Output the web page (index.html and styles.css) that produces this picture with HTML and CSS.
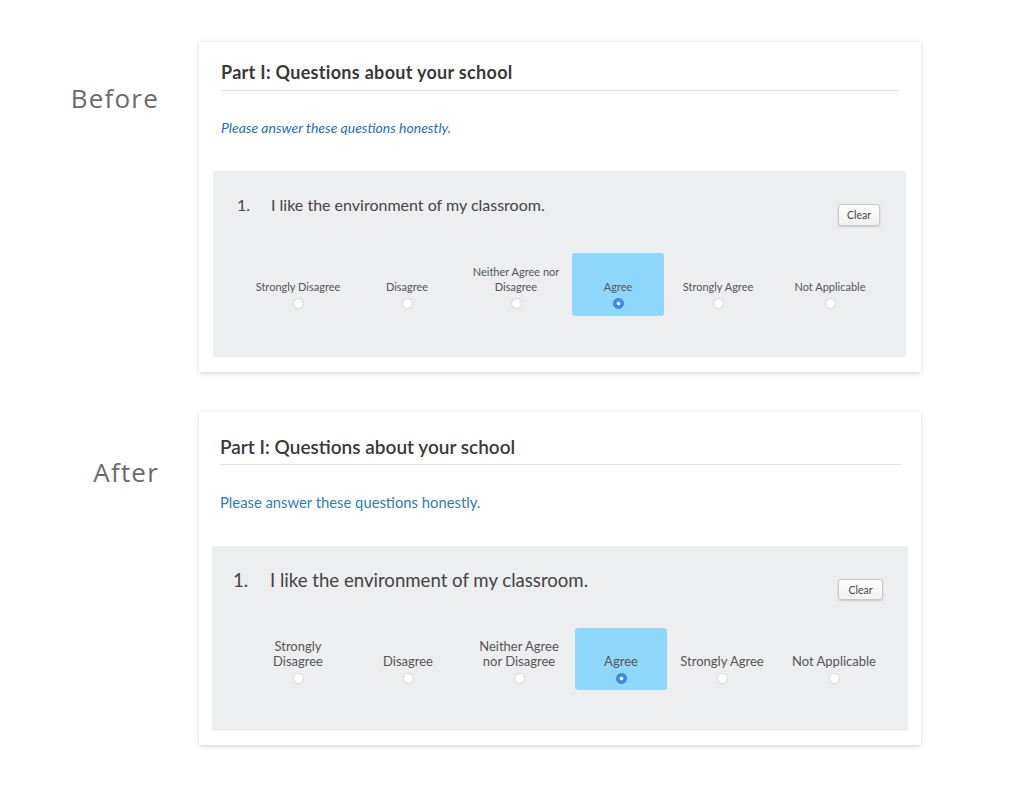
FILE: index.html
```html
<!DOCTYPE html>
<html lang="en">
<head>
<meta charset="utf-8">
<title>Before / After survey</title>
<link rel="stylesheet" href="styles.css">
</head>
<body>
<main class="page">
  <section class="row row-before">
    <div class="tag">Before</div>
    <div class="card">
      <div class="head">
        <h2 class="title">Part I: Questions about your school</h2>
      </div>
      <p class="intro">Please answer these questions honestly.</p>
      <div class="question">
        <div class="q-top">
          <div class="q-text"><span class="num">1.</span><span>I like the environment of my classroom.</span></div>
          <button class="clear" type="button">Clear</button>
        </div>
        <div class="options">
          <div class="opt"><span class="lbl">Strongly Disagree</span><span class="radio"></span></div>
          <div class="opt"><span class="lbl">Disagree</span><span class="radio"></span></div>
          <div class="opt"><span class="lbl">Neither Agree nor<br>Disagree</span><span class="radio"></span></div>
          <div class="opt selected"><span class="lbl">Agree</span><span class="radio on"></span></div>
          <div class="opt"><span class="lbl">Strongly Agree</span><span class="radio"></span></div>
          <div class="opt"><span class="lbl">Not Applicable</span><span class="radio"></span></div>
        </div>
      </div>
    </div>
  </section>

  <section class="row row-after">
    <div class="tag">After</div>
    <div class="card">
      <div class="head">
        <h2 class="title">Part I: Questions about your school</h2>
      </div>
      <p class="intro">Please answer these questions honestly.</p>
      <div class="question">
        <div class="q-top">
          <div class="q-text"><span class="num">1.</span><span>I like the environment of my classroom.</span></div>
          <button class="clear" type="button">Clear</button>
        </div>
        <div class="options">
          <div class="opt"><span class="lbl">Strongly<br>Disagree</span><span class="radio"></span></div>
          <div class="opt"><span class="lbl">Disagree</span><span class="radio"></span></div>
          <div class="opt"><span class="lbl">Neither Agree<br>nor Disagree</span><span class="radio"></span></div>
          <div class="opt selected"><span class="lbl">Agree</span><span class="radio on"></span></div>
          <div class="opt"><span class="lbl">Strongly Agree</span><span class="radio"></span></div>
          <div class="opt"><span class="lbl">Not Applicable</span><span class="radio"></span></div>
        </div>
      </div>
    </div>
  </section>
</main>
</body>
</html>
```

FILE: styles.css
```css
* { box-sizing: border-box; }

html, body {
  margin: 0;
  padding: 0;
  background: #ffffff;
}

body {
  font-family: "Lato", "Open Sans", sans-serif;
  color: #444;
}

.page {
  display: flex;
  flex-direction: column;
  gap: 40px;
  padding: 42px 0 43px;
}

.row {
  display: grid;
  grid-template-columns: 158px 722px;
  column-gap: 41px;
  align-items: start;
}

.tag {
  text-align: right;
  font-family: "Open Sans", sans-serif;
  font-weight: 400;
  font-size: 26px;
  line-height: 32px;
  color: #6b6b6b;
  letter-spacing: 1.2px;
  margin-right: -1px;
}

.row-before .tag { padding-top: 40px; }
.row-after .tag { padding-top: 44px; }

.card {
  background: #fff;
  box-shadow: 0 1px 5px rgba(0, 0, 0, 0.18);
}

.title {
  margin: 0;
  color: #3a3a3a;
}

.intro { margin: 0; }

.question {
  background: #edeef0;
}

.q-top {
  display: flex;
  justify-content: space-between;
  align-items: flex-start;
}

.q-text {
  display: flex;
  color: #444;
}

.clear {
  font-family: "Lato", sans-serif;
  font-size: 10.5px;
  color: #444;
  background: linear-gradient(#ffffff, #f1f1f1);
  border: 1px solid #c8c8c8;
  border-radius: 3px;
  box-shadow: 0 1px 2px rgba(0, 0, 0, 0.15);
  padding: 0;
  cursor: pointer;
}

.options {
  display: grid;
}

.opt {
  display: flex;
  flex-direction: column;
  justify-content: flex-end;
  align-items: center;
  text-align: center;
  color: #555;
}

.opt.selected {
  background: #8fd8fc;
  border-radius: 3px;
}

.radio {
  display: block;
  width: 11px;
  height: 11px;
  border-radius: 50%;
  background: #fff;
  border: 1px solid #d6d6d6;
  margin-top: 4px;
}

.radio.on {
  background: radial-gradient(circle, #ffffff 0 1.6px, #3a8cf0 2.2px);
  border-color: #2f7fe6;
}

/* ---------- Before ---------- */
.row-before .card {
  padding: 0 15px 15px 14px;
}

.row-before .head {
  margin: 0 7px 0 8px;
  padding: 20px 0 8px;
  border-bottom: 1px solid #e2e2e2;
}

.row-before .title {
  font-size: 18px;
  line-height: 20px;
  font-weight: 700;
  letter-spacing: 0.3px;
}

.row-before .intro {
  margin: 29px 0 0 8px;
  font-size: 14px;
  line-height: 16px;
  font-style: italic;
  color: #2a6fb5;
}

.row-before .question {
  margin-top: 35px;
  padding: 23px 26px 41px 24px;
}

.row-before .q-text {
  font-size: 16px;
  line-height: 22px;
  font-weight: 400;
  color: #454545;
}

.row-before .num { width: 34px; }

.row-before .clear {
  margin-top: 10px;
  width: 42px;
  height: 22px;
}

.row-before .options {
  margin: 27px 0 0 5px;
  grid-template-columns: 112px 106px 112px 92px 108px 116px;
}

.row-before .opt {
  height: 63px;
  padding-bottom: 7px;
  font-size: 11px;
  line-height: 15px;
}

/* ---------- After ---------- */
.row-after .card {
  padding: 0 13px 14px 13px;
}

.row-after .head {
  margin: 0 7px 0 8px;
  padding: 24px 0 6px;
  border-bottom: 1px solid #e2e2e2;
}

.row-after .title {
  font-size: 19px;
  line-height: 22px;
  font-weight: 600;
}

.row-after .intro {
  margin: 28px 0 0 8px;
  font-size: 14.8px;
  line-height: 18px;
  color: #2f7dc0;
}

.row-after .question {
  margin-top: 35px;
  padding: 22px 25px 41px 21px;
}

.row-after .q-text {
  font-size: 18.6px;
  line-height: 24px;
  font-weight: 400;
}

.row-after .num { width: 37px; }

.row-after .clear {
  margin-top: 11px;
  width: 45px;
  height: 21px;
}

.row-after .options {
  margin: 28px 0 0 10px;
  grid-template-columns: 110px 110px 112px 92px 110px 114px;
}

.row-after .opt {
  height: 62px;
  padding-bottom: 6px;
  font-size: 13px;
  line-height: 15px;
}
```
